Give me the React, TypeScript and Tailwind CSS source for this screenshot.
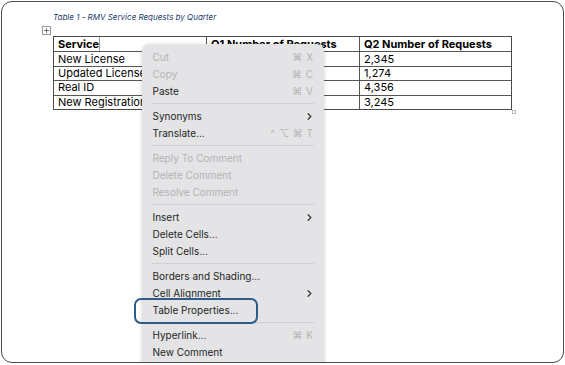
import { ChevronRight } from 'lucide-react';

type Item = {
  label: string;
  disabled?: boolean;
  shortcut?: string;
  submenu?: boolean;
};

const groups: Item[][] = [
  [
    { label: 'Cut', disabled: true, shortcut: '⌘ X' },
    { label: 'Copy', disabled: true, shortcut: '⌘ C' },
    { label: 'Paste', shortcut: '⌘ V' },
  ],
  [
    { label: 'Synonyms', submenu: true },
    { label: 'Translate...', shortcut: '^ ⌥ ⌘ T' },
  ],
  [
    { label: 'Reply To Comment', disabled: true },
    { label: 'Delete Comment', disabled: true },
    { label: 'Resolve Comment', disabled: true },
  ],
  [
    { label: 'Insert', submenu: true },
    { label: 'Delete Cells...' },
    { label: 'Split Cells...' },
  ],
  [
    { label: 'Borders and Shading...' },
    { label: 'Cell Alignment', submenu: true },
    { label: 'Table Properties...' },
  ],
  [
    { label: 'Hyperlink...', shortcut: '⌘ K' },
    { label: 'New Comment' },
  ],
];

const rows = [
  ['Service', 'Q1 Number of Requests', 'Q2 Number of Requests'],
  ['New License', '', '2,345'],
  ['Updated License', '', '1,274'],
  ['Real ID', '', '4,356'],
  ['New Registration', '', '3,245'],
];

const MoveHandle = () => (
  <svg width="9" height="9" viewBox="0 0 9 9" className="block">
    <rect x="0.5" y="0.5" width="8" height="8" fill="#fff" stroke="#9a9a9a" />
    <path d="M4.5 2v5M2 4.5h5" stroke="#555" strokeWidth="0.8" />
  </svg>
);

const MenuRow = ({ item }: { item: Item }) => (
  <div className="h-[17px] flex items-center justify-between pl-[11px] pr-[10px]">
    <span className={item.disabled ? 'text-[#b3b3b5]' : 'text-[#1f1f1f]'}>{item.label}</span>
    {item.shortcut && (
      <span className="text-[#b3b3b5] tracking-[0.5px]">{item.shortcut}</span>
    )}
    {item.submenu && (
      <ChevronRight className="w-[11px] h-[11px] text-[#333] -mr-[1px]" strokeWidth={2.6} />
    )}
  </div>
);

export default function App() {
  return (
    <div className="w-[565px] h-[365px] bg-white p-[1px]">
      <div className="relative w-[563px] h-[362px] border-[1.5px] border-[#4d4d4d] rounded-[11px] overflow-hidden bg-white">
        {/* Document body */}
        <div className="pl-[51px] pt-[9px]">
          <p
            className="text-[8px] italic text-[#25406b] leading-[12px]"
            style={{ fontFamily: 'Inter, "Liberation Sans", sans-serif' }}
          >
            Table 1 - RMV Service Requests by Quarter
          </p>
          <div className="-ml-[11px] mt-[3px] h-[10px]">
            <MoveHandle />
          </div>
          <div
            className="relative w-[459px] border-[1.5px] border-[#4a4a4a] text-[11px] text-black"
            style={{ fontFamily: 'Inter, "Liberation Sans", sans-serif' }}
          >
            {rows.map((r, i) => (
              <div
                key={i}
                className={`grid grid-cols-[152px_153px_1fr] h-[14.4px] ${i > 0 ? 'border-t border-[#555]' : ''}`}
              >
                {r.map((c, j) => (
                  <div
                    key={j}
                    className={`relative flex items-center pl-[4px] leading-none ${j > 0 ? 'border-l border-[#555]' : ''} ${i === 0 ? 'font-bold' : ''}`}
                  >
                    {c}
                    {i === 0 && j === 0 && (
                      <span className="absolute left-[45px] top-0 bottom-0 w-px bg-[#999]" />
                    )}
                  </div>
                ))}
              </div>
            ))}
            <span className="absolute -right-[5px] -bottom-[5px] w-[4px] h-[4px] border border-[#bbb] bg-white" />
          </div>
        </div>

        {/* Context menu */}
        <div
          className="absolute left-[139.5px] top-[41.5px] w-[182px] h-[340px] bg-[#e4e4e6] rounded-tl-[7px] rounded-tr-[7px] shadow-[0_1px_4px_rgba(0,0,0,0.18)] pt-[5px] text-[10px]"
          style={{ fontFamily: 'Inter, "Liberation Sans", sans-serif' }}
        >
          {groups.map((g, gi) => (
            <div key={gi}>
              {gi > 0 && (
                <div className="h-[8px] flex items-center px-[10px]">
                  <div className="h-px w-full bg-[#d0d0d2]" />
                </div>
              )}
              {g.map((item) => (
                <MenuRow key={item.label} item={item} />
              ))}
            </div>
          ))}
        </div>

        {/* Annotation highlight */}
        <div className="absolute left-[132px] top-[295.5px] w-[124px] h-[26px] border-[2.5px] border-[#2d5b8c] rounded-[7px]" />
      </div>
    </div>
  );
}
